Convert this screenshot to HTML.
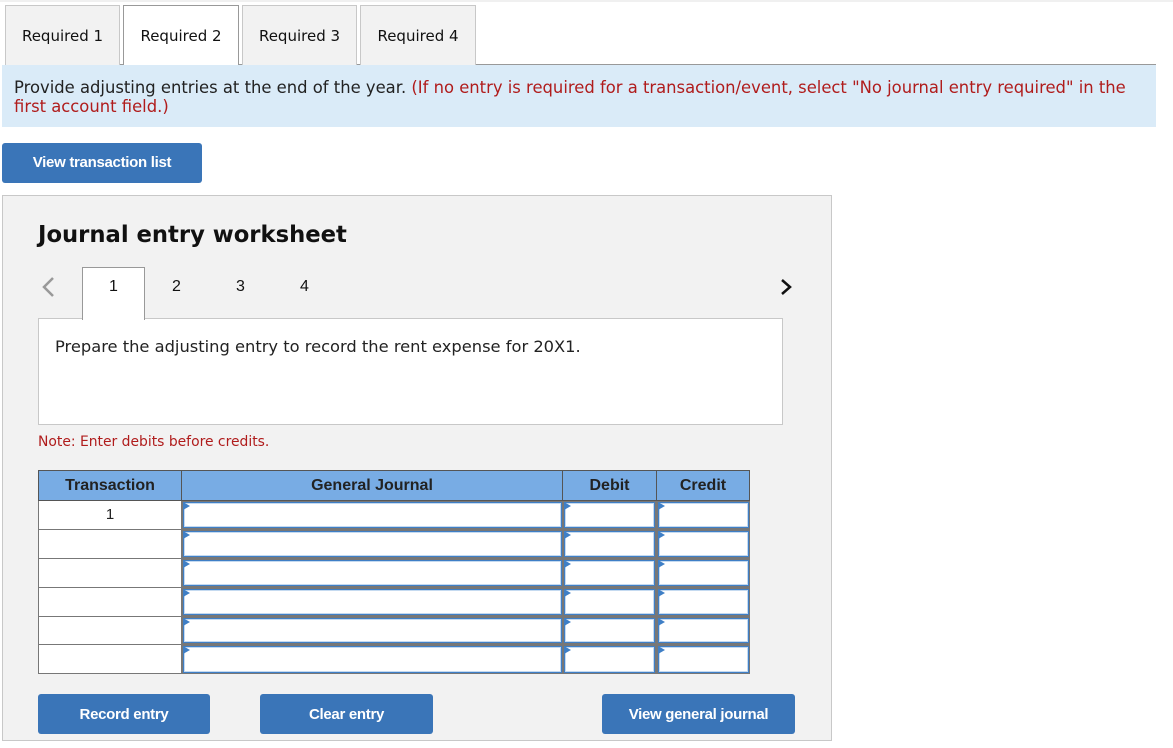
<!DOCTYPE html>
<html><head><meta charset="utf-8"><style>
*{margin:0;padding:0;box-sizing:border-box}
body{width:1173px;height:748px;background:#fff;position:relative;overflow:hidden;font-family:"DejaVu Sans",Verdana,sans-serif}
.a{position:absolute}
.tab{position:absolute;top:5px;height:60px;background:#f2f2f2;border:1px solid #c8c8c8;border-bottom:none;font-size:15px;color:#111;text-align:center;line-height:60px}
.btn{position:absolute;background:#3a75b8;color:#fff;font:bold 15px "Liberation Sans",Arial,sans-serif;text-align:center;border-radius:3px;letter-spacing:-0.3px}
.h{position:absolute;top:470px;height:31px;background:#78ace4;border:1px solid #555;border-left:none;font:bold 16px "Liberation Sans",Arial,sans-serif;color:#222;text-align:center;line-height:30px}
.c{position:absolute;background:#fff;border-bottom:1px solid #777;border-right:1px solid #777;border-left:1px solid #777}
.in{position:absolute;background:#fff;border:1px solid #3f7fc6;box-shadow:inset 0 0 0 1px #c5daf0}
.in:before{content:"";position:absolute;left:-1px;top:-1px;border-left:7px solid #3f7fc6;border-top:4px solid transparent;border-bottom:4px solid transparent}
</style></head><body>
<div class="a" style="left:0;top:0;width:1173px;height:2px;background:#f0f0f0"></div>
<div class="a" style="left:5px;top:64px;width:1151px;height:1px;background:#999"></div>
<div class="tab" style="left:5px;width:115px">Required 1</div>
<div class="tab" style="left:123px;width:116px;background:#fff;border-color:#999;height:61px">Required 2</div>
<div class="tab" style="left:242px;width:115px">Required 3</div>
<div class="tab" style="left:360px;width:116px">Required 4</div>
<div class="a" style="left:2px;top:65px;width:1154px;height:62px;background:#daebf8"></div>
<div class="a" style="left:14px;top:78px;font-size:16.4px;line-height:19px;color:#222;white-space:nowrap">Provide adjusting entries at the end of the year. <span style="color:#b01c1c">(If no entry is required for a transaction/event, select "No journal entry required" in the<br>first account field.)</span></div>
<div class="btn" style="left:2px;top:143px;width:200px;height:40px;line-height:40px">View transaction list</div>
<div class="a" style="left:2px;top:195px;width:830px;height:546px;background:#f2f2f2;border:1px solid #c8c8c8"></div>
<div class="a" style="left:38px;top:222px;font-weight:bold;font-size:22.7px;color:#111">Journal entry worksheet</div>
<svg class="a" style="left:40px;top:276px" width="16" height="22"><path d="M13 2 L4 11 L13 20" stroke="#999" stroke-width="2.5" fill="none"/></svg>
<svg class="a" style="left:778px;top:277px" width="16" height="20"><path d="M4 3 L12 10 L4 17" stroke="#111" stroke-width="2.5" fill="none"/></svg>
<div class="a" style="left:38px;top:318px;width:745px;height:107px;background:#fff;border:1px solid #c8c8c8"></div>
<div class="a" style="left:82px;top:267px;width:63px;height:53px;background:#fff;border:1px solid #999;border-bottom:none"></div>
<div class="a" style="left:82px;top:278px;width:63px;text-align:center;font:16px 'Liberation Sans',Arial,sans-serif;color:#111">1</div>
<div class="a" style="left:172px;top:278px;font:16px 'Liberation Sans',Arial,sans-serif;color:#111">2</div>
<div class="a" style="left:236px;top:278px;font:16px 'Liberation Sans',Arial,sans-serif;color:#111">3</div>
<div class="a" style="left:300px;top:278px;font:16px 'Liberation Sans',Arial,sans-serif;color:#111">4</div>
<div class="a" style="left:55px;top:337px;font-size:16.3px;color:#222">Prepare the adjusting entry to record the rent expense for 20X1.</div>
<div class="a" style="left:38px;top:434px;font-size:13.9px;color:#b01c1c">Note: Enter debits before credits.</div>
<div class="h" style="left:38px;width:144px;border-left:1px solid #555">Transaction</div>
<div class="h" style="left:182px;width:381px">General Journal</div>
<div class="h" style="left:563px;width:94px">Debit</div>
<div class="h" style="left:657px;width:93px">Credit</div>
<div class="c" style="left:38px;top:501px;width:144px;height:29px;text-align:center;font:15px 'Liberation Sans',Arial,sans-serif;line-height:28px;color:#222">1</div>
<div class="c" style="left:38px;top:530px;width:144px;height:29px"></div>
<div class="c" style="left:38px;top:559px;width:144px;height:29px"></div>
<div class="c" style="left:38px;top:588px;width:144px;height:29px"></div>
<div class="c" style="left:38px;top:617px;width:144px;height:28px"></div>
<div class="c" style="left:38px;top:645px;width:144px;height:29px"></div>
<div class="a" style="left:181px;top:501px;width:569px;height:173px;background:#777"></div>
<div class="in" style="left:183px;top:502px;width:379px;height:26px"></div><div class="in" style="left:564px;top:502px;width:91px;height:26px"></div><div class="in" style="left:658px;top:502px;width:91px;height:26px"></div>
<div class="in" style="left:183px;top:531px;width:379px;height:26px"></div><div class="in" style="left:564px;top:531px;width:91px;height:26px"></div><div class="in" style="left:658px;top:531px;width:91px;height:26px"></div>
<div class="in" style="left:183px;top:560px;width:379px;height:26px"></div><div class="in" style="left:564px;top:560px;width:91px;height:26px"></div><div class="in" style="left:658px;top:560px;width:91px;height:26px"></div>
<div class="in" style="left:183px;top:589px;width:379px;height:26px"></div><div class="in" style="left:564px;top:589px;width:91px;height:26px"></div><div class="in" style="left:658px;top:589px;width:91px;height:26px"></div>
<div class="in" style="left:183px;top:618px;width:379px;height:25px"></div><div class="in" style="left:564px;top:618px;width:91px;height:25px"></div><div class="in" style="left:658px;top:618px;width:91px;height:25px"></div>
<div class="in" style="left:183px;top:646px;width:379px;height:27px"></div><div class="in" style="left:564px;top:646px;width:91px;height:27px"></div><div class="in" style="left:658px;top:646px;width:91px;height:27px"></div>
<div class="btn" style="left:38px;top:694px;width:172px;height:40px;line-height:41px">Record entry</div>
<div class="btn" style="left:260px;top:694px;width:173px;height:40px;line-height:41px">Clear entry</div>
<div class="btn" style="left:602px;top:694px;width:193px;height:40px;line-height:41px">View general journal</div>
</body></html>
